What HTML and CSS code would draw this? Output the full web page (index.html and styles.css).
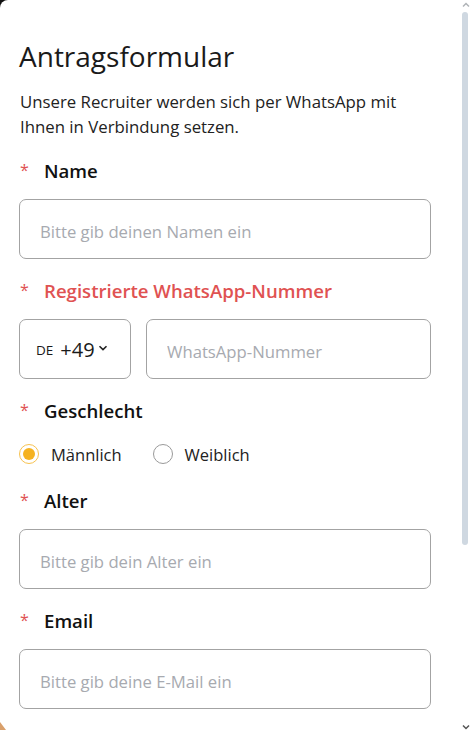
FILE: index.html
```html
<!DOCTYPE html>
<html>
    <head>
        <link rel="stylesheet" href="styles.css">
    </head>
    <body>
        <div class="sheet">
            <h1 class="title">Antragsformular</h1>
            <p class="intro">Unsere Recruiter werden sich per WhatsApp mit Ihnen in Verbindung setzen.</p>
            <form>
                <div class="label"><span class="star">*</span>Name</div>
                <input class="field" type="text" placeholder="Bitte gib deinen Namen ein">

                <div class="label error"><span class="star">*</span>Registrierte WhatsApp-Nummer</div>
                <div class="phone-row">
                    <div class="country">
                        <span class="code">DE</span>
                        <span class="prefix">+49</span>
                        <svg class="caret" width="10" height="8" viewBox="0 0 10 8"><path d="M1.5 2.2 L5 5.6 L8.5 2.2" fill="none" stroke="#222" stroke-width="1.6"/></svg>
                    </div>
                    <input class="field phone" type="tel" placeholder="WhatsApp-Nummer">
                </div>

                <div class="label"><span class="star">*</span>Geschlecht</div>
                <div class="radios">
                    <label class="radio checked"><span class="dot"></span>Männlich</label>
                    <label class="radio"><span class="dot"></span>Weiblich</label>
                </div>

                <div class="label"><span class="star">*</span>Alter</div>
                <input class="field" type="text" placeholder="Bitte gib dein Alter ein">

                <div class="label"><span class="star">*</span>Email</div>
                <input class="field" type="email" placeholder="Bitte gib deine E-Mail ein">
            </form>
        </div>
        <!-- fake overlay scrollbar -->
        <div class="thumb"></div>
        <svg class="arrow up" width="10" height="8" viewBox="0 0 10 8"><path d="M2 5.5 L5 2.5 L8 5.5" fill="none" stroke="#b0b4b8" stroke-width="1.5"/></svg>
        <svg class="arrow down" width="10" height="8" viewBox="0 0 10 8"><path d="M2 2.5 L5 5.5 L8 2.5" fill="none" stroke="#555" stroke-width="1.5"/></svg>
        <div class="corner"></div>
    </body>
</html>
```
FILE: styles.css
```css
html, body{
    margin: 0;
    background: #111;
}
body{
    font-family: "Open Sans", "Noto Sans", sans-serif;
    color: #1a1a1a;
    overflow: hidden;
}
.sheet{
    height: 730px;
    overflow: hidden;
    background: #fff;
    border-top-left-radius: 8px;
    padding: 0 41px 0 19px;
    box-sizing: border-box;
}
.title{
    margin: 0;
    padding-top: 38px;
    font-size: 28px;
    line-height: 36px;
    font-weight: 400;
}
.intro{
    margin: 15px 0 0 1px;
    font-size: 16.8px;
    line-height: 25px;
    color: #222;
}
.label{
    display: flex;
    align-items: center;
    height: 30px;
    margin: 16px 0 14px;
    font-size: 18.6px;
    font-weight: 600;
    color: #111;
}
.label.error{
    color: #e05252;
}
.star{
    color: #e05252;
    font-weight: 400;
    font-size: 16px;
    width: 24px;
    padding-left: 1px;
}
.field{
    display: block;
    width: 100%;
    height: 60px;
    box-sizing: border-box;
    border: 1px solid #a3a3a3;
    border-radius: 7px;
    padding: 4px 20px 0;
    font-family: inherit;
    font-size: 16.7px;
    color: #222;
    outline: none;
}
.field::placeholder{
    color: #a7aab0;
}
.phone-row{
    display: flex;
    gap: 15px;
}
.country{
    width: 112px;
    height: 60px;
    box-sizing: border-box;
    border: 1px solid #a3a3a3;
    border-radius: 7px;
    display: flex;
    align-items: center;
    padding-left: 16px;
}
.code{
    font-size: 13.5px;
    margin-right: 7px;
    padding-top: 2px;
}
.prefix{
    font-size: 20px;
}
.caret{
    margin-left: 3px;
    margin-top: -3px;
}
.phone{
    flex: 1;
    width: auto;
}
.radios{
    display: flex;
    align-items: center;
    height: 30px;
    gap: 31px;
}
.radio{
    display: flex;
    align-items: center;
    font-size: 16.5px;
    color: #222;
}
.dot{
    width: 20px;
    height: 20px;
    box-sizing: border-box;
    border: 1px solid #9a9a9a;
    border-radius: 50%;
    margin-right: 12px;
    position: relative;
}
.radio.checked .dot{
    border-color: #f7c24f;
}
.radio.checked .dot::after{
    content: "";
    position: absolute;
    left: 3px;
    top: 3px;
    width: 12px;
    height: 12px;
    border-radius: 50%;
    background: #f5b21f;
}
.thumb{
    position: fixed;
    right: 4px;
    top: 12px;
    width: 6px;
    height: 533px;
    border-radius: 3px;
    background: #cfd8e1;
}
.arrow{
    position: fixed;
    right: 1px;
}
.arrow.up{
    top: 1px;
}
.arrow.down{
    bottom: -1px;
}
.corner{
    position: fixed;
    left: 0;
    bottom: 0;
    width: 0;
    height: 0;
    border-left: 6px solid #d9a06b;
    border-top: 8px solid transparent;
}
```
